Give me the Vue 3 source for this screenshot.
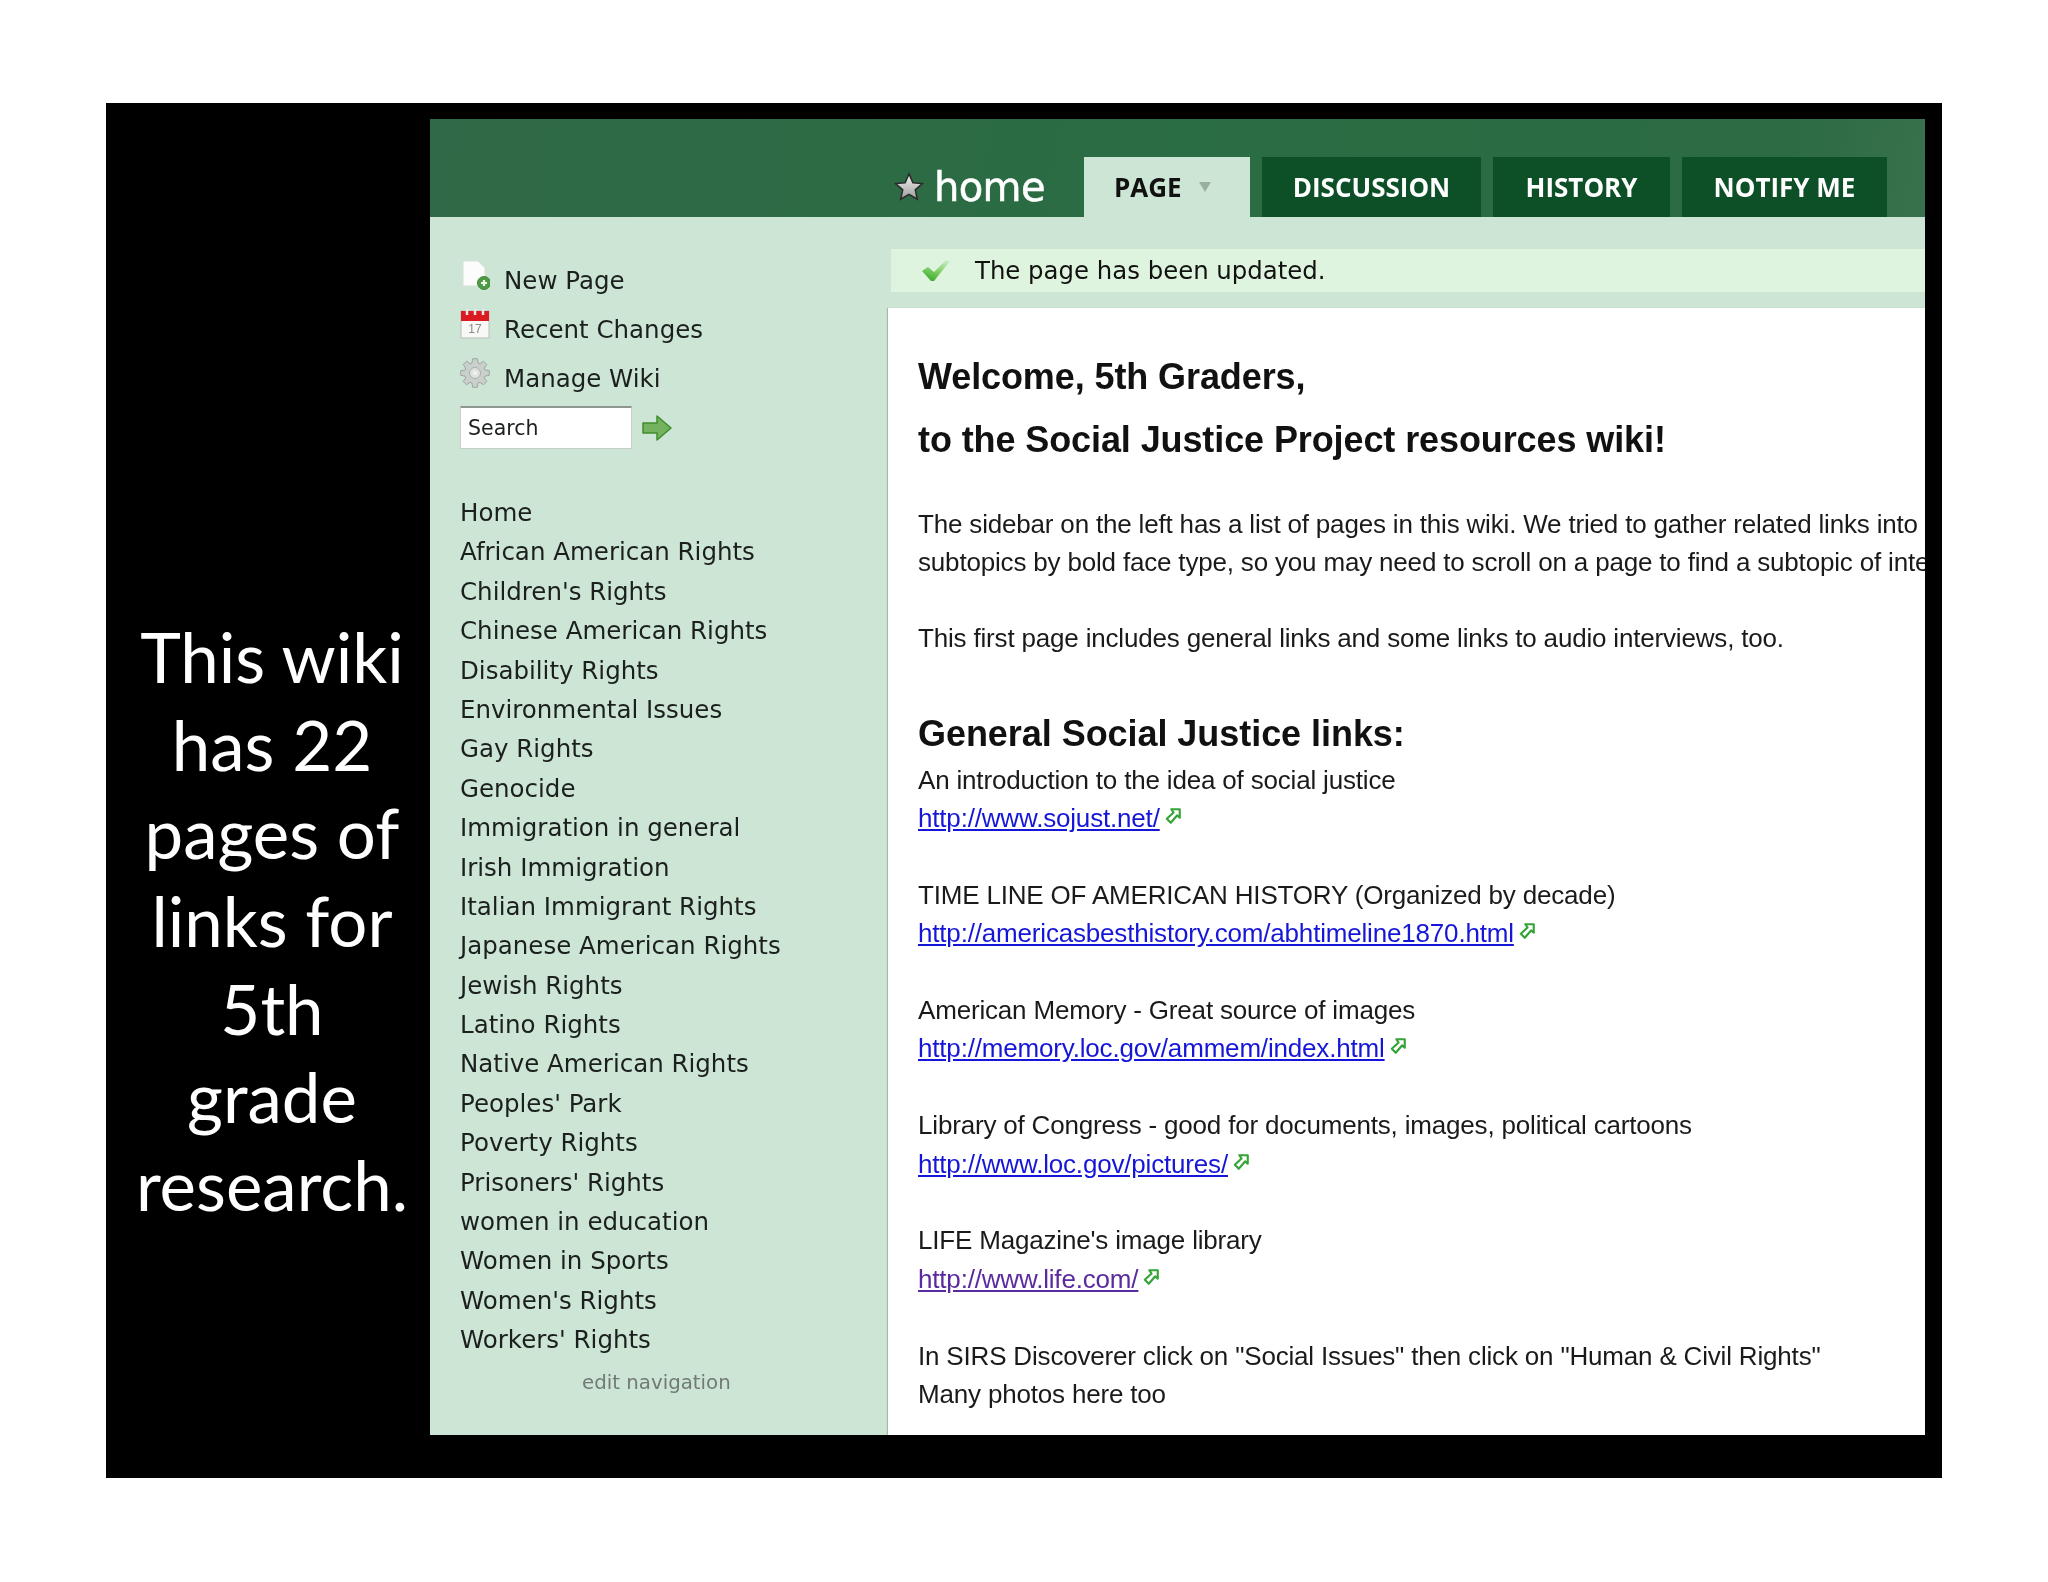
<template>
  <div class="slide">
    <div class="caption">
      <p v-for="line in captionLines" :key="line">{{ line }}</p>
    </div>

    <div class="window">
      <header class="topbar">
        <div class="brand">
          <svg class="star" viewBox="0 0 24 24" width="30" height="30">
            <defs>
              <linearGradient id="starFill" x1="0" y1="0" x2="0" y2="1">
                <stop offset="0" stop-color="#f4f4f2" />
                <stop offset="1" stop-color="#9b9d9b" />
              </linearGradient>
            </defs>
            <path d="M12 1.500l3.100 7.100 7.600.7-5.700 5 1.700 7.500-6.700-3.900-6.700 3.900 1.700-7.500-5.700-5 7.600-.7z" fill="url(#starFill)" stroke="#2a2a2a" stroke-width="1.200" />
          </svg>
          <span>home</span>
        </div>
        <nav class="tabs">
          <a class="tab active">PAGE <i class="caret"></i></a>
          <a class="tab discussion">DISCUSSION</a>
          <a class="tab history">HISTORY</a>
          <a class="tab notify">NOTIFY ME</a>
        </nav>
      </header>

      <div class="body">
        <aside class="sidebar">
          <div class="tool">
            <svg class="tool-icon" viewBox="0 0 30 30" width="30" height="30">
              <path d="M3 1h15l7 7v18H3z" fill="#fbfcfb" stroke="#d9dfda" />
              <circle cx="24" cy="23" r="6.500" fill="#4f9a45" stroke="#3e8a38" />
              <path d="M21 23h6M24 20v6" stroke="#eef6ea" stroke-width="2.200" />
            </svg>
            <span>New Page</span>
          </div>
          <div class="tool">
            <svg class="tool-icon" viewBox="0 0 30 30" width="30" height="30">
              <rect x="1" y="2" width="28" height="27" fill="#f8f8f6" stroke="#b9bfba" />
              <rect x="1" y="2" width="28" height="10" fill="#dc1a22" />
              <path d="M7 0v6M15 0v6M23 0v6" stroke="#e9e9e9" stroke-width="2.500" />
              <text x="15" y="24" class="cal-day">17</text>
            </svg>
            <span>Recent Changes</span>
          </div>
          <div class="tool">
            <svg class="tool-icon" viewBox="0 0 30 30" width="30" height="30">
              <polygon :points="gearPoints" fill="#c9cfca" stroke="#9ea5a0" stroke-width="1" />
              <circle cx="15" cy="15" r="5.500" fill="#dfe3e0" stroke="#a9b0ab" />
              <circle cx="15" cy="15" r="2" fill="#f2f4f2" />
            </svg>
            <span>Manage Wiki</span>
          </div>
          <div class="search">
            <div class="search-box">Search</div>
            <svg viewBox="0 0 30 26" width="30" height="26">
              <path d="M1 8h14V1l14 12-14 12v-7H1z" fill="#74b25e" stroke="#3f8d2c" stroke-width="1.500" stroke-linejoin="round" />
            </svg>
          </div>

          <ul class="pages">
            <li v-for="page in pages" :key="page">{{ page }}</li>
          </ul>
          <div class="edit-nav">edit navigation</div>
        </aside>

        <div class="column">
          <div class="notice">
            <svg viewBox="0 0 30 22" width="30" height="22">
              <defs>
                <linearGradient id="checkFill" x1="0.800" y1="0" x2="0.300" y2="1">
                  <stop offset="0" stop-color="#c6e8bc" />
                  <stop offset="0.500" stop-color="#7fd066" />
                  <stop offset="1" stop-color="#3fa92f" />
                </linearGradient>
              </defs>
              <path d="M1 11l6-4 6 5L24 1h5L13 21h-3z" fill="url(#checkFill)" />
            </svg>
            <span>The page has been updated.</span>
          </div>

          <main class="content">
            <h1>Welcome, 5th Graders,</h1>
            <h1>to the Social Justice Project resources wiki!</h1>

            <p class="intro">The sidebar on the left has a list of pages in this wiki. We tried to gather related links into</p>
            <p>subtopics by bold face type, so you may need to scroll on a page to find a subtopic of interest.</p>
            <p class="gap">This first page includes general links and some links to audio interviews, too.</p>

            <h2>General Social Justice links:</h2>

            <div v-for="item in links" :key="item.title" class="entry">
              <p>{{ item.title }}</p>
              <p>
                <a :class="{ visited: item.visited }">{{ item.url }}</a>
                <svg class="ext" viewBox="0 0 16 16" width="18" height="18">
                  <path d="M6.500 2h7.500v7.500l-2.400-2-5.600 6.500-3.500-3.500 6-5.600z" fill="none" stroke="#35a335" stroke-width="1.900" stroke-linejoin="round" />
                </svg>
              </p>
            </div>

            <div class="entry">
              <p>In SIRS Discoverer click on "Social Issues" then click on "Human &amp; Civil Rights"</p>
              <p>Many photos here too</p>
            </div>
          </main>
        </div>
      </div>
    </div>
  </div>
</template>

<script setup>
const captionLines = ['This wiki', 'has 22', 'pages of', 'links for', '5th', 'grade', 'research.']

const pages = [
  'Home',
  'African American Rights',
  "Children's Rights",
  'Chinese American Rights',
  'Disability Rights',
  'Environmental Issues',
  'Gay Rights',
  'Genocide',
  'Immigration in general',
  'Irish Immigration',
  'Italian Immigrant Rights',
  'Japanese American Rights',
  'Jewish Rights',
  'Latino Rights',
  'Native American Rights',
  "Peoples' Park",
  'Poverty Rights',
  "Prisoners' Rights",
  'women in education',
  'Women in Sports',
  "Women's Rights",
  "Workers' Rights"
]

const links = [
  { title: 'An introduction to the idea of social justice', url: 'http://www.sojust.net/' },
  { title: 'TIME LINE OF AMERICAN HISTORY (Organized by decade)', url: 'http://americasbesthistory.com/abhtimeline1870.html' },
  { title: 'American Memory - Great source of images', url: 'http://memory.loc.gov/ammem/index.html' },
  { title: 'Library of Congress - good for documents, images, political cartoons', url: 'http://www.loc.gov/pictures/' },
  { title: "LIFE Magazine's image library", url: 'http://www.life.com/', visited: true }
]

// 8 teeth, each tooth is 4 points around the centre
const gearPoints = Array.from({ length: 8 }, (_, i) => {
  const mid = (i * Math.PI) / 4
  return [[-0.3, 10.5], [-0.16, 14.5], [0.16, 14.5], [0.3, 10.5]]
    .map(([da, r]) => `${(15 + r * Math.cos(mid + da)).toFixed(2)},${(15 + r * Math.sin(mid + da)).toFixed(2)}`)
    .join(' ')
}).join(' ')
</script>

<style>
html,
body {
  background: #fff;
}
</style>

<style scoped>
.slide {
  display: flex;
  width: 1836px;
  height: 1375px;
  margin: 103px 0 104px 106px;
  background: #000;
}

.caption {
  width: 324px;
  flex-shrink: 0;
  padding: 510px 0 0 8px;
  box-sizing: border-box;
  text-align: center;
  color: #fff;
  font-family: Lato, sans-serif;
  font-size: 69px;
  line-height: 88px;
}

.caption p {
  margin: 0;
}

.window {
  width: 1495px;
  height: 1316px;
  margin-top: 16px;
  overflow: hidden;
  display: flex;
  flex-direction: column;
  background: #cde5d5;
  filter: blur(0.5px);
}

.topbar {
  height: 98px;
  flex-shrink: 0;
  display: flex;
  align-items: flex-end;
  box-sizing: border-box;
  padding-left: 464px;
  background: linear-gradient(100deg, #306947 0%, #2a6c43 50%, #2c6b43 90%, #38714d 100%);
  font-family: "DejaVu Sans", sans-serif;
}

.brand {
  width: 190px;
  height: 60px;
  display: flex;
  align-items: center;
  gap: 10px;
  color: #fff;
  font-size: 40px;
  font-weight: 500;
  letter-spacing: -0.6px;
  -webkit-text-stroke: 0.5px #fff;
}

.star {
  flex-shrink: 0;
}

.tabs {
  display: flex;
  gap: 12px;
}

.tab {
  height: 60px;
  display: flex;
  align-items: center;
  justify-content: center;
  background: #0d5027;
  color: #fff;
  font-family: "Open Sans", sans-serif;
  font-size: 26px;
  font-weight: 700;
}

.active {
  width: 166px;
  box-sizing: border-box;
  padding-left: 30px;
  justify-content: flex-start;
  gap: 17px;
  background: #cde5d5;
  color: #111;
}

.discussion {
  width: 219px;
}

.history {
  width: 177px;
}

.notify {
  width: 205px;
}

.caret {
  width: 0;
  height: 0;
  border-left: 6px solid transparent;
  border-right: 6px solid transparent;
  border-top: 10px solid #9aaea0;
}

.body {
  flex: 1;
  display: flex;
  min-height: 0;
}

.sidebar {
  width: 458px;
  flex-shrink: 0;
  box-sizing: border-box;
  padding: 39px 0 0 30px;
  color: #1b1f1d;
  font-family: "DejaVu Sans", sans-serif;
  font-size: 24.500px;
}

.tool {
  height: 49px;
  display: flex;
  align-items: center;
  gap: 14px;
}

.tool-icon {
  width: 30px;
  flex-shrink: 0;
  margin-bottom: 11px;
}

.cal-day {
  font-family: "Liberation Sans", sans-serif;
  font-size: 12px;
  fill: #888;
  text-anchor: middle;
}

.search {
  display: flex;
  align-items: center;
  gap: 10px;
  margin-top: 3px;
}

.search-box {
  width: 172px;
  height: 43px;
  box-sizing: border-box;
  padding-left: 7px;
  display: flex;
  align-items: center;
  background: #fff;
  border: 1px solid #c9cec9;
  border-top: 2px solid #8f968f;
  font-size: 20.500px;
}

.pages {
  list-style: none;
  margin: 44px 0 0;
  padding: 0;
}

.pages li {
  height: 39.400px;
  line-height: 39.400px;
  white-space: nowrap;
}

.edit-nav {
  margin-top: 11px;
  padding-left: 122px;
  color: #727a75;
  font-size: 19.800px;
}

.column {
  flex: 1;
  min-width: 0;
  display: flex;
  flex-direction: column;
}

.notice {
  height: 43px;
  flex-shrink: 0;
  margin: 32px 0 0 3px;
  padding-left: 30px;
  display: flex;
  align-items: center;
  gap: 24px;
  background: #def4de;
  color: #111;
  font-family: "DejaVu Sans", sans-serif;
  font-size: 24.400px;
}

.content {
  flex: 1;
  margin-top: 16px;
  padding: 37px 0 0 30px;
  background: #fff;
  box-shadow: -1px 0 1px #a9b8ae;
  color: #1a1a1a;
  font-family: "Liberation Sans", sans-serif;
  font-size: 26px;
  letter-spacing: -0.18px;
  line-height: 38.400px;
  white-space: nowrap;
  overflow: hidden;
}

.content h1 {
  margin: 0;
  height: 63px;
  line-height: 63px;
  font-size: 36px;
  font-weight: 700;
  letter-spacing: -0.1px;
  color: #111;
}

.content h2 {
  margin: 52px 0 3px;
  height: 48px;
  line-height: 48px;
  font-size: 36px;
  font-weight: 700;
  letter-spacing: -0.05px;
  color: #111;
}

.content p {
  margin: 0;
}

.intro {
  padding-top: 34px;
}

.gap {
  margin-top: 37.400px !important;
}

.entry + .entry {
  margin-top: 38.400px;
}

.content a {
  color: #1616d8;
  text-decoration: underline;
}

.content a.visited {
  color: #5b2a9e;
}

.ext {
  margin-left: 4px;
  vertical-align: 2px;
}
</style>
